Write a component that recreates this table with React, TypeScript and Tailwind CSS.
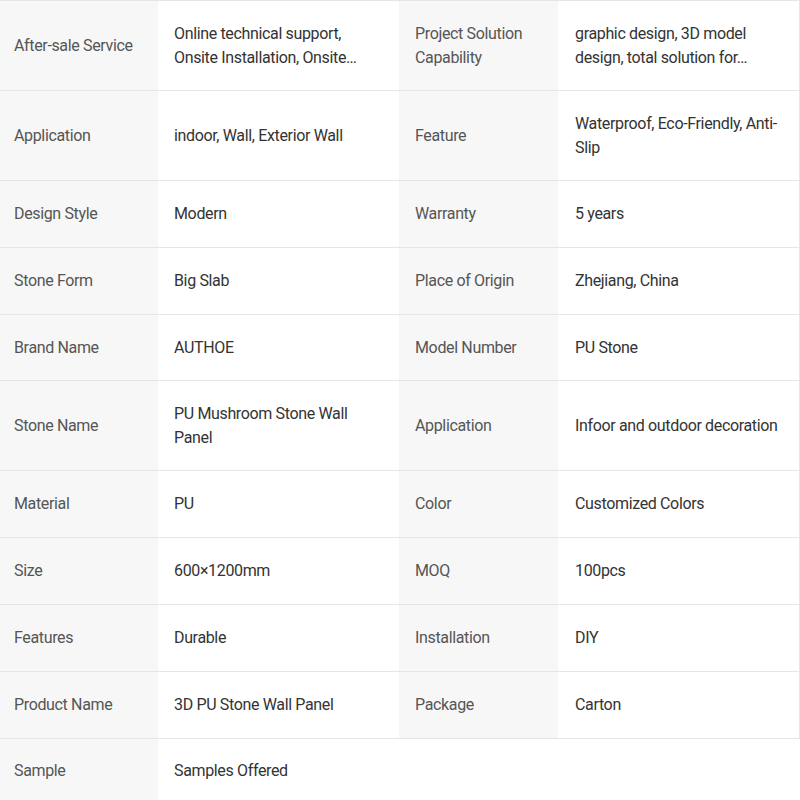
import React from "react";

type Cell = { label: string; value: React.ReactNode };
type Row = { cells: Cell[]; tall?: boolean; h?: string };

const rows: Row[] = [
  {
    tall: true,
    cells: [
      { label: "After-sale Service", value: <>Online technical support,<br />Onsite Installation, Onsite…</> },
      { label: "Project Solution Capability", value: <>graphic design, 3D model<br />design, total solution for…</> },
    ],
  },
  {
    tall: true,
    cells: [
      { label: "Application", value: "indoor, Wall, Exterior Wall" },
      { label: "Feature", value: <>Waterproof, Eco-Friendly, Anti-<br />Slip</> },
    ],
  },
  { cells: [{ label: "Design Style", value: "Modern" }, { label: "Warranty", value: "5 years" }] },
  { cells: [{ label: "Stone Form", value: "Big Slab" }, { label: "Place of Origin", value: "Zhejiang, China" }] },
  { h: "h-[66px]", cells: [{ label: "Brand Name", value: "AUTHOE" }, { label: "Model Number", value: "PU Stone" }] },
  {
    tall: true,
    cells: [
      { label: "Stone Name", value: <>PU Mushroom Stone Wall<br />Panel</> },
      { label: "Application", value: "Infoor and outdoor decoration" },
    ],
  },
  { cells: [{ label: "Material", value: "PU" }, { label: "Color", value: "Customized Colors" }] },
  { cells: [{ label: "Size", value: "600×1200mm" }, { label: "MOQ", value: "100pcs" }] },
  { cells: [{ label: "Features", value: "Durable" }, { label: "Installation", value: "DIY" }] },
  { cells: [{ label: "Product Name", value: "3D PU Stone Wall Panel" }, { label: "Package", value: "Carton" }] },
  { cells: [{ label: "Sample", value: "Samples Offered" }] },
];

export default function App() {
  return (
    <div
      className="w-[800px] h-[800px] overflow-hidden bg-white text-[16px] leading-[24px] tracking-[-0.35px]"
      style={{ fontFamily: "Roboto, 'Liberation Sans', sans-serif" }}
    >
      <div className="flex flex-col border-t border-[#e6e6e6]">
        {rows.map((row, i) => {
          const last = i === rows.length - 1;
          const h = row.h ?? (row.tall ? "h-[90px]" : "h-[67px]");
          return (
            <div
              key={i}
              className={`flex ${last ? "h-[63px]" : h} ${last ? "" : "border-b border-[#e6e6e6]"}`}
            >
              <div className="w-[158px] shrink-0 bg-[#f7f7f7] pl-[14px] pr-3 flex items-center text-[#555555]">
                {row.cells[0].label}
              </div>
              <div className="w-[241px] shrink-0 px-4 flex items-center text-[#333333]">
                {row.cells[0].value}
              </div>
              {row.cells[1] ? (
                <>
                  <div className="w-[159px] shrink-0 bg-[#f7f7f7] px-4 flex items-center text-[#555555]">
                    {row.cells[1].label}
                  </div>
                  <div className="flex-1 pl-[17px] pr-2 flex items-center text-[#333333] border-r border-[#e6e6e6]">
                    {row.cells[1].value}
                  </div>
                </>
              ) : (
                <div className="flex-1" />
              )}
            </div>
          );
        })}
      </div>
    </div>
  );
}
